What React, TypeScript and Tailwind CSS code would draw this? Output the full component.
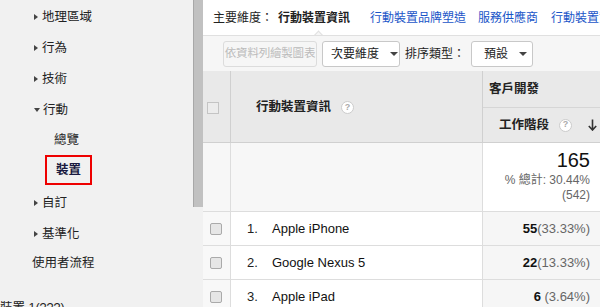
import React from "react";

const font = { fontFamily: '"Liberation Sans", Arial, "Noto Sans CJK TC", sans-serif' };

function Tri({ down = false }: { down?: boolean }) {
  return down ? (
    <span className="inline-block w-0 h-0 border-l-[3.5px] border-r-[3.5px] border-t-[4px] border-l-transparent border-r-transparent border-t-[#444] mr-[3px] mb-[2px]" />
  ) : (
    <span className="inline-block w-0 h-0 border-t-[3.5px] border-b-[3.5px] border-l-[4px] border-t-transparent border-b-transparent border-l-[#444] mr-[4px] mb-[1px]" />
  );
}

function Caret() {
  return <span className="inline-block w-0 h-0 border-l-[4px] border-r-[4px] border-t-[4px] border-l-transparent border-r-transparent border-t-[#444] ml-[11px]" />;
}

function Help() {
  return (
    <span className="inline-flex items-center justify-center w-[13px] h-[13px] rounded-full bg-white border border-[#ccc] text-[9px] text-[#aaa] font-bold ml-[10px]">?</span>
  );
}

function Box() {
  return <span className="block w-[12px] h-[12px] rounded-[2px] border border-[#aaa] bg-[#e6e6e6]" />;
}

function DownArrow() {
  return (
    <svg width="9" height="12" viewBox="0 0 9 12" className="ml-[16px]">
      <path d="M4.5 0.5v10M0.8 7l3.7 4 3.7-4" stroke="#333" strokeWidth="1.6" fill="none" />
    </svg>
  );
}

const navItems = [
  { label: "地理區域", tri: "r" },
  { label: "行為", tri: "r" },
  { label: "技術", tri: "r" },
  { label: "行動", tri: "d" },
];

const rows = [
  { n: "1.", name: "Apple iPhone", v: "55", p: "(33.33%)" },
  { n: "2.", name: "Google Nexus 5", v: "22", p: "(13.33%)" },
  { n: "3.", name: "Apple iPad", v: "6", p: " (3.64%)" },
];

export default function App() {
  return (
    <div className="flex w-[600px] h-[307px] overflow-hidden bg-white text-[13px] text-[#222]" style={font}>
      <aside className="w-[193px] shrink-0 bg-[#f1f1f1] pt-[2px] text-[12.5px] overflow-hidden">
        {navItems.map((it) => (
          <div key={it.label} className="h-[31px] flex items-center pl-[34px]">
            <Tri down={it.tri === "d"} />
            <span>{it.label}</span>
          </div>
        ))}
        <div className="h-[29px] flex items-center pl-[54px]">總覽</div>
        <div className="h-[30px] flex items-center pl-[45px]">
          <span className="border-[2px] border-[#e00] w-[47px] h-[30px] flex items-center justify-center font-bold text-[#1a1a40]">裝置</span>
        </div>
        <div className="h-[3px]" />
        <div className="h-[31px] flex items-center pl-[34px]"><Tri /><span>自訂</span></div>
        <div className="h-[31px] flex items-center pl-[34px]"><Tri /><span>基準化</span></div>
        <div className="h-[27px] flex items-center pl-[32px]">使用者流程</div>
        <div className="mt-[25px] leading-none whitespace-nowrap">裝置 1(???)</div>
      </aside>
      <div className="w-[10px] shrink-0 bg-[#f1f1f1]">
        <div className="h-[207px] bg-[#c1c1c1] border-l border-[#a8a8a8]" />
      </div>
      <main className="flex-1 flex flex-col min-w-0">
        <div className="h-[36px] shrink-0 flex items-center pl-[10px] border-b border-[#e0e0e0] whitespace-nowrap text-[12px] relative overflow-hidden">
          <span>主要維度：</span>
          <span className="ml-[5px] font-bold">行動裝置資訊</span>
          <span className="ml-[20px] text-[#1a55c8]">行動裝置品牌塑造</span>
          <span className="ml-[12px] text-[#1a55c8]">服務供應商</span>
          <span className="ml-[13px] text-[#1a55c8]">行動裝置資訊</span>
          <span className="absolute left-[112px] bottom-[-4px] w-[7px] h-[7px] rotate-45 bg-[#f6f6f6] border-l border-t border-[#e0e0e0]" />
        </div>
        <div className="h-[35px] shrink-0 bg-[#f6f6f6] flex items-center pl-[20px] whitespace-nowrap text-[12px]">
          <span className="h-[26px] w-[94px] flex items-center justify-center overflow-hidden border border-[#dcdcdc] rounded-[3px] text-[#bbb] text-[11.5px] tracking-[-0.2px]">依資料列繪製圖表</span>
          <span className="ml-[5px] h-[26px] w-[78px] pl-[8px] flex items-center border border-[#c8c8c8] rounded-[3px] bg-white">次要維度<Caret /></span>
          <span className="ml-[5px]">排序類型：</span>
          <span className="ml-[6px] h-[26px] w-[62px] pl-[12px] flex items-center border border-[#c8c8c8] rounded-[3px] bg-white">預設<Caret /></span>
        </div>
        <div className="grid grid-cols-[28px_252px_117px] shrink-0">
          <div className="h-[72px] bg-[#e9e9e9] border-r border-[#d0d0d0] border-b flex items-center justify-center pr-[8px] pt-[2px]">
            <span className="block w-[12px] h-[12px] border border-[#c4c4c4] bg-[#ececec]" />
          </div>
          <div className="h-[72px] bg-[#e9e9e9] border-r border-[#d0d0d0] border-b flex items-center pl-[25px] pt-[2px] font-bold text-[12.5px]">
            行動裝置資訊<Help />
          </div>
          <div className="h-[72px] bg-[#e9e9e9] border-b border-[#d0d0d0] flex flex-col text-[12.5px]">
            <div className="h-[37px] border-b border-[#d6d6d6] flex items-center pl-[6px] font-bold">客戶開發</div>
            <div className="flex-1 flex items-center pl-[16px] font-bold whitespace-nowrap">
              工作階段<Help /><DownArrow />
            </div>
          </div>
          <div className="h-[69px] bg-[#f7f7f7] border-r border-[#ddd] border-b" />
          <div className="h-[69px] bg-[#f7f7f7] border-r border-[#ddd] border-b" />
          <div className="h-[69px] bg-white border-b border-[#ddd] flex flex-col items-end pr-[10px] pt-[7px] leading-none">
            <span className="text-[20px] text-[#111]">165</span>
            <span className="mt-[4px] text-[12px] text-[#666]">% 總計: 30.44%</span>
            <span className="mt-[3px] text-[12px] text-[#666]">(542)</span>
          </div>
          {rows.map((r) => (
            <React.Fragment key={r.n}>
              <div className="h-[34px] bg-[#f8f8f8] border-r border-[#ddd] border-b flex items-center justify-center pr-[2px]"><Box /></div>
              <div className="h-[34px] bg-white border-r border-[#ddd] border-b flex items-center pl-[16px] whitespace-nowrap">
                <span className="w-[25px] text-[#222]">{r.n}</span>
                <span className="text-[#111]">{r.name}</span>
              </div>
              <div className="h-[34px] bg-[#f6f6f6] border-b border-[#ddd] flex items-center justify-end pr-[10px] whitespace-nowrap">
                <span className="font-bold text-[#111]">{r.v}</span>
                <span className="text-[#666] whitespace-pre">{r.p}</span>
              </div>
            </React.Fragment>
          ))}
        </div>
      </main>
    </div>
  );
}
